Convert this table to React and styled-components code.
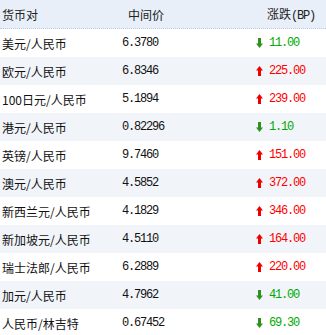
import React from 'react'
import styled, { createGlobalStyle } from 'styled-components'

const GlobalStyle = createGlobalStyle`
  html, body {
    margin: 0;
    padding: 0;
    background: #fff;
  }
`

const Table = styled.div`
  width: 326px;
  font-family: "Noto Sans CJK SC", "Liberation Sans", sans-serif;
  font-size: 12px;
  color: #111;
`

const Row = styled.div`
  display: grid;
  grid-template-columns: 120px 134px 1fr;
  align-items: center;
  height: 28px;
  padding-left: 2px;
  background: ${p => (p.$alt ? '#f1f5fa' : '#fff')};
`

const HeadRow = styled(Row)`
  height: 28px;
  background: #e8eff8;
  border-bottom: 1px dotted #b8cde8;
  color: #222;
`

const HeadCell = styled.div`
  padding-left: ${p => p.$indent || 0}px;
  white-space: nowrap;
`

const Paren = styled.span`
  font-family: "Liberation Mono", monospace;
  letter-spacing: -1.2px;
`

const Pair = styled.div`
  white-space: nowrap;
`

const Num = styled.div`
  font-family: "Liberation Mono", monospace;
  letter-spacing: -1.2px;
  color: #111;
`

const Change = styled.div`
  display: flex;
  align-items: center;
  gap: 6px;
  font-family: "Liberation Mono", monospace;
  letter-spacing: -1.2px;
  color: ${p => (p.$up ? '#ff0000' : '#00aa00')};
`

const Arrow = ({ up }) => (
  <svg width="7" height="10" viewBox="0 0 7 10">
    {up ? (
      <path d="M3.5 0 L7 4.5 L5 4.5 L5 10 L2 10 L2 4.5 L0 4.5 Z" fill="#ee0000" />
    ) : (
      <path d="M3.5 10 L7 5.5 L5 5.5 L5 0 L2 0 L2 5.5 L0 5.5 Z" fill="#2f8f1f" />
    )}
  </svg>
)

const data = [
  ['美元/人民币', '6.3780', false, '11.00'],
  ['欧元/人民币', '6.8346', true, '225.00'],
  ['100日元/人民币', '5.1894', true, '239.00'],
  ['港元/人民币', '0.82296', false, '1.10'],
  ['英镑/人民币', '9.7460', true, '151.00'],
  ['澳元/人民币', '4.5852', true, '372.00'],
  ['新西兰元/人民币', '4.1829', true, '346.00'],
  ['新加坡元/人民币', '4.5110', true, '164.00'],
  ['瑞士法郎/人民币', '6.2889', true, '220.00'],
  ['加元/人民币', '4.7962', false, '41.00'],
  ['人民币/林吉特', '0.67452', false, '69.30'],
]

const App = () => (
  <>
    <GlobalStyle />
    <Table>
      <HeadRow>
        <HeadCell>货币对</HeadCell>
        <HeadCell $indent={6}>中间价</HeadCell>
        <HeadCell $indent={11}>涨跌<Paren>(BP)</Paren></HeadCell>
      </HeadRow>
      {data.map(([pair, mid, up, chg], i) => (
        <Row key={pair} $alt={i % 2 === 1}>
          <Pair>{pair}</Pair>
          <Num>{mid}</Num>
          <Change $up={up}>
            <Arrow up={up} />
            {chg}
          </Change>
        </Row>
      ))}
    </Table>
  </>
)

export default App
